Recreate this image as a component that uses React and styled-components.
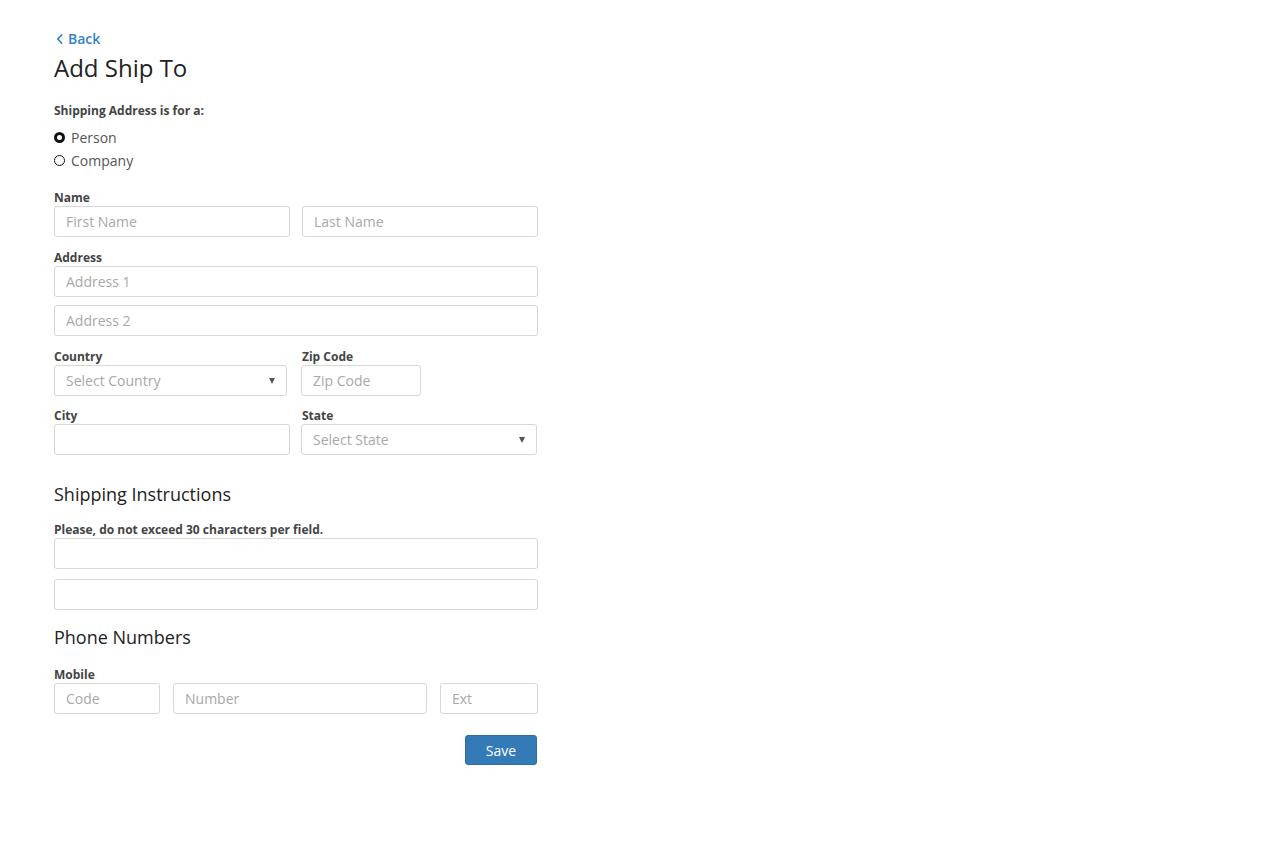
import React from "react";
import styled, { createGlobalStyle } from "styled-components";

const Global = createGlobalStyle`
  html, body { margin: 0; padding: 0; background: #fff; }
  body { font-family: "Open Sans", "Noto Sans", sans-serif; color: #333; }
  * { box-sizing: border-box; }
`;

const Page = styled.div`
  padding: 27px 0 60px 54px;
  width: 538px;
`;

const BackLink = styled.a`
  display: inline-flex;
  align-items: center;
  gap: 5px;
  color: #3582c4;
  font-size: 14px;
  font-weight: 600;
  line-height: 20px;
  text-decoration: none;
  margin-left: 2px;
`;

const Title = styled.h1`
  margin: 0;
  font-size: 24px;
  font-weight: 400;
  line-height: 37px;
  color: #222;
`;

const Label = styled.div`
  font-size: 12px;
  font-weight: 700;
  color: #444;
  line-height: 17px;
`;

const RadioGroup = styled.div`
  margin-top: 16px;
`;

const RadioList = styled.div`
  display: flex;
  flex-direction: column;
  margin-top: 7px;
`;

const RadioRow = styled.label`
  display: flex;
  align-items: center;
  gap: 6px;
  font-size: 14px;
  line-height: 23px;
  color: #555;
`;

const RadioDot = styled.span`
  width: 11px;
  height: 11px;
  border-radius: 50%;
  border: ${(p) => (p.$checked ? "3.5px" : "1.5px")} solid #111;
  background: #fff;
  flex: none;
`;

const Section = styled.div`
  margin-top: ${(p) => p.$mt || 0}px;
`;

const Input = styled.input`
  display: block;
  width: ${(p) => (p.$w ? `${p.$w}px` : "100%")};
  height: 31px;
  border: 1px solid #d7d7d7;
  border-radius: 3px;
  padding: 0 11px;
  font-family: "Open Sans", "Noto Sans", sans-serif;
  font-size: 14px;
  font-weight: 400;
  color: #333;
  background: #fff;
  outline: none;
  &::placeholder { color: #a8a8a8; }
`;

const Stack = styled.div`
  display: flex;
  flex-direction: column;
  gap: ${(p) => p.$gap || 8}px;
`;

const TwoCol = styled.div`
  display: grid;
  grid-template-columns: 236px 236px;
  column-gap: 12px;
`;

const Field = styled.div`
  display: flex;
  flex-direction: column;
  margin-top: ${(p) => p.$mt || 0}px;
`;

const SelectBox = styled.div`
  width: ${(p) => (p.$w ? `${p.$w}px` : "100%")};
  height: 31px;
  border: 1px solid #d7d7d7;
  border-radius: 3px;
  padding: 0 11px;
  display: flex;
  align-items: center;
  justify-content: space-between;
  font-size: 14px;
  font-weight: 400;
  color: #a8a8a8;
`;

const Caret = styled.span`
  width: 0;
  height: 0;
  border-left: 3.5px solid transparent;
  border-right: 3.5px solid transparent;
  border-top: 6px solid #555;
`;

const Heading = styled.h2`
  margin: 0;
  font-size: 18px;
  font-weight: 400;
  color: #222;
  line-height: 26px;
`;

const PhoneRow = styled.div`
  display: grid;
  grid-template-columns: 106px 254px 98px;
  column-gap: 13px;
`;

const Actions = styled.div`
  display: flex;
  justify-content: flex-end;
  margin-top: 21px;
  padding-right: 1px;
`;

const Button = styled.button`
  width: 72px;
  height: 30px;
  border: 1px solid #2e6da4;
  border-radius: 3px;
  background: #337ab7;
  color: #fff;
  font-family: "Open Sans", "Noto Sans", sans-serif;
  font-size: 14px;
  font-weight: 400;
  cursor: pointer;
`;

export default function App() {
  return (
    <>
      <Global />
      <Page>
        <BackLink href="#">
          <svg width="7" height="10" viewBox="0 0 7 10" fill="none">
            <path d="M5.5 1 L1.8 5 L5.5 9" stroke="#3582c4" strokeWidth="1.8" strokeLinecap="round" strokeLinejoin="round" />
          </svg>
          Back
        </BackLink>
        <Title>Add Ship To</Title>

        <RadioGroup>
          <Label>Shipping Address is for a:</Label>
          <RadioList>
            <RadioRow><RadioDot $checked />Person</RadioRow>
            <RadioRow><RadioDot />Company</RadioRow>
          </RadioList>
        </RadioGroup>

        <Field $mt={17}>
          <Label>Name</Label>
          <TwoCol>
            <Input placeholder="First Name" />
            <Input placeholder="Last Name" />
          </TwoCol>
        </Field>

        <Field $mt={12}>
          <Label>Address</Label>
          <Stack>
            <Input placeholder="Address 1" />
            <Input placeholder="Address 2" />
          </Stack>
        </Field>

        <TwoCol>
          <Field $mt={12}>
            <Label>Country</Label>
            <SelectBox $w={233}>Select Country<Caret /></SelectBox>
          </Field>
          <Field $mt={12}>
            <Label>Zip Code</Label>
            <Input $w={120} placeholder="Zip Code" style={{ marginLeft: -1 }} />
          </Field>
          <Field $mt={11}>
            <Label>City</Label>
            <Input />
          </Field>
          <Field $mt={11}>
            <Label>State</Label>
            <SelectBox style={{ marginLeft: -1 }}>Select State<Caret /></SelectBox>
          </Field>
        </TwoCol>

        <Section $mt={26}>
          <Heading>Shipping Instructions</Heading>
        </Section>
        <Field $mt={14}>
          <Label>Please, do not exceed 30 characters per field.</Label>
          <Stack $gap={10}>
            <Input />
            <Input />
          </Stack>
        </Field>

        <Section $mt={14}>
          <Heading>Phone Numbers</Heading>
        </Section>
        <Field $mt={16}>
          <Label>Mobile</Label>
          <PhoneRow>
            <Input placeholder="Code" />
            <Input placeholder="Number" />
            <Input placeholder="Ext" />
          </PhoneRow>
        </Field>

        <Actions>
          <Button>Save</Button>
        </Actions>
      </Page>
    </>
  );
}
